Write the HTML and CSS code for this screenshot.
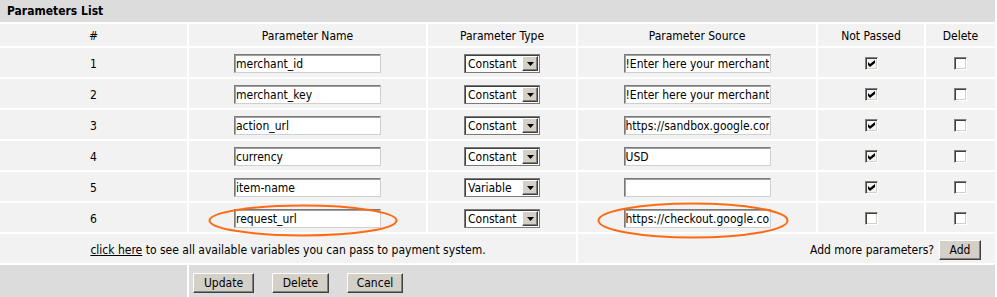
FILE: index.html
```html
<!DOCTYPE html>
<html>
<head>
<meta charset="utf-8">
<link rel="stylesheet" href="styles.css">
</head>
<body>
<div class="panel">
  <div class="title">Parameters List</div>
  <div class="grid">
    <div class="cell head">#</div>
    <div class="cell head">Parameter Name</div>
    <div class="cell head">Parameter Type</div>
    <div class="cell head">Parameter Source</div>
    <div class="cell head">Not Passed</div>
    <div class="cell head">Delete</div>

    <div class="cell">1</div>
    <div class="cell"><input class="txt" value="merchant_id"></div>
    <div class="cell"><span class="sel"><span class="sel-text">Constant</span><span class="sel-btn"><svg width="7" height="4" viewBox="0 0 7 4"><path d="M0 0h7L3.5 4z" fill="#000"/></svg></span></span></div>
    <div class="cell"><input class="txt" value="!Enter here your merchant id"></div>
    <div class="cell"><span class="chk on"><svg width="7" height="7" viewBox="0 0 7 7"><path d="M0 2l2 2 5-4v3l-5 4-2-2z" fill="#000"/></svg></span></div>
    <div class="cell"><span class="chk"></span></div>

    <div class="cell">2</div>
    <div class="cell"><input class="txt" value="merchant_key"></div>
    <div class="cell"><span class="sel"><span class="sel-text">Constant</span><span class="sel-btn"><svg width="7" height="4" viewBox="0 0 7 4"><path d="M0 0h7L3.5 4z" fill="#000"/></svg></span></span></div>
    <div class="cell"><input class="txt" value="!Enter here your merchant key"></div>
    <div class="cell"><span class="chk on"><svg width="7" height="7" viewBox="0 0 7 7"><path d="M0 2l2 2 5-4v3l-5 4-2-2z" fill="#000"/></svg></span></div>
    <div class="cell"><span class="chk"></span></div>

    <div class="cell">3</div>
    <div class="cell"><input class="txt" value="action_url"></div>
    <div class="cell"><span class="sel"><span class="sel-text">Constant</span><span class="sel-btn"><svg width="7" height="4" viewBox="0 0 7 4"><path d="M0 0h7L3.5 4z" fill="#000"/></svg></span></span></div>
    <div class="cell"><input class="txt" value="https://sandbox.google.com/checkout"></div>
    <div class="cell"><span class="chk on"><svg width="7" height="7" viewBox="0 0 7 7"><path d="M0 2l2 2 5-4v3l-5 4-2-2z" fill="#000"/></svg></span></div>
    <div class="cell"><span class="chk"></span></div>

    <div class="cell">4</div>
    <div class="cell"><input class="txt" value="currency"></div>
    <div class="cell"><span class="sel"><span class="sel-text">Constant</span><span class="sel-btn"><svg width="7" height="4" viewBox="0 0 7 4"><path d="M0 0h7L3.5 4z" fill="#000"/></svg></span></span></div>
    <div class="cell"><input class="txt" value="USD"></div>
    <div class="cell"><span class="chk on"><svg width="7" height="7" viewBox="0 0 7 7"><path d="M0 2l2 2 5-4v3l-5 4-2-2z" fill="#000"/></svg></span></div>
    <div class="cell"><span class="chk"></span></div>

    <div class="cell">5</div>
    <div class="cell"><input class="txt" value="item-name"></div>
    <div class="cell"><span class="sel"><span class="sel-text">Variable</span><span class="sel-btn"><svg width="7" height="4" viewBox="0 0 7 4"><path d="M0 0h7L3.5 4z" fill="#000"/></svg></span></span></div>
    <div class="cell"><input class="txt" value=""></div>
    <div class="cell"><span class="chk on"><svg width="7" height="7" viewBox="0 0 7 7"><path d="M0 2l2 2 5-4v3l-5 4-2-2z" fill="#000"/></svg></span></div>
    <div class="cell"><span class="chk"></span></div>

    <div class="cell">6</div>
    <div class="cell mark">
      <input class="txt" value="request_url">
      <svg class="ring ring-name" width="190" height="33" viewBox="0 0 190 33"><ellipse cx="95" cy="16.5" rx="93.5" ry="15" fill="none" stroke="#ff6a14" stroke-width="2"/></svg>
    </div>
    <div class="cell"><span class="sel"><span class="sel-text">Constant</span><span class="sel-btn"><svg width="7" height="4" viewBox="0 0 7 4"><path d="M0 0h7L3.5 4z" fill="#000"/></svg></span></span></div>
    <div class="cell mark">
      <input class="txt" value="https://checkout.google.com/api">
      <svg class="ring ring-src" width="192" height="37" viewBox="0 0 192 37"><ellipse cx="96" cy="18.5" rx="94.5" ry="17" fill="none" stroke="#ff6a14" stroke-width="2"/></svg>
    </div>
    <div class="cell"><span class="chk"></span></div>
    <div class="cell"><span class="chk"></span></div>

    <div class="cell foot-left"><a href="#" class="link">click here</a>&nbsp;to see all available variables you can pass to payment system.</div>
    <div class="cell foot-right"><span class="add-label">Add more parameters?</span><button class="btn btn-add">Add</button></div>
  </div>
  <div class="actions">
    <div class="act-left"></div>
    <div class="act-right">
      <button class="btn btn-update">Update</button>
      <button class="btn btn-delete">Delete</button>
      <button class="btn btn-cancel">Cancel</button>
    </div>
  </div>
</div>
</body>
</html>
```

FILE: styles.css
```css
* { box-sizing: border-box; }
html, body { margin: 0; padding: 0; background: #fff; }
body {
  font-family: "DejaVu Sans Condensed", "DejaVu Sans", sans-serif;
  font-size: 12px;
  color: #000;
}
.panel { width: 995px; }
.title {
  height: 22px;
  background: #dcdcdc;
  font-weight: bold;
  font-size: 12px;
  line-height: 22px;
  padding-left: 7px;
}
.grid {
  display: grid;
  grid-template-columns: 187px 237px 148px 238px 106px 69px;
  grid-template-rows: 22px repeat(6, 29px) 29px;
  gap: 2px;
  padding: 2px 0 2px;
  background: #fff;
}
.cell {
  background: #f2f2f2;
  display: flex;
  align-items: center;
  justify-content: center;
  padding-top: 2px;
}
.cell.head { padding-top: 1px; }
.mark { position: relative; }
.ring { position: absolute; pointer-events: none; }
.ring-name { left: 19px; top: 1px; }
.ring-src { left: 19px; top: -1px; }
.txt {
  width: 147px;
  height: 19px;
  margin: 0;
  padding: 0 1px;
  font-family: "DejaVu Sans Condensed", "DejaVu Sans", sans-serif;
  font-size: 12px;
  color: #000;
  background: #fff;
  border: 1px solid;
  border-color: #7a7a7a #cfcfcf #cfcfcf #7a7a7a;
  box-shadow: inset 1px 1px 0 #a0a0a0;
  outline: none;
}
.sel {
  width: 76px;
  height: 19px;
  display: flex;
  align-items: center;
  background: #fff;
  border: 1px solid #7a7a7a;
  box-shadow: inset 1px 1px 0 #404040;
  padding: 1px 1px 1px 3px;
}
.sel-text { flex: 1; line-height: 17px; padding-top: 1px; }
.sel-btn {
  width: 16px;
  height: 15px;
  background: #d4d0c8;
  border: 1px solid;
  border-color: #fff #404040 #404040 #fff;
  box-shadow: inset -1px -1px 0 #808080;
  display: flex;
  align-items: center;
  justify-content: center;
}
.chk {
  width: 13px;
  height: 13px;
  background: #fff;
  border: 1px solid;
  border-color: #808080 #fff #fff #808080;
  box-shadow: inset 1px 1px 0 #404040, inset -1px -1px 0 #d4d0c8;
  display: flex;
  align-items: center;
  justify-content: center;
}
.chk.on { background: #f4f4f4; }
.foot-left { grid-column: 1 / 4; }
.foot-right {
  grid-column: 4 / 7;
  justify-content: flex-end;
  padding-right: 14px;
}
.add-label { margin-right: 5px; }
.link { color: #000; text-decoration: underline; }
.btn {
  height: 20px;
  margin: 0;
  padding: 0;
  font-family: "DejaVu Sans Condensed", "DejaVu Sans", sans-serif;
  font-size: 12px;
  color: #000;
  background: #d4d0c8;
  border: 1px solid;
  border-color: #fff #404040 #404040 #fff;
  box-shadow: inset -1px -1px 0 #808080;
  cursor: pointer;
}
.btn-add { width: 42px; }
.btn-update { width: 61px; }
.btn-delete { width: 57px; }
.btn-cancel { width: 56px; }
.actions {
  display: grid;
  grid-template-columns: 187px 1fr;
  gap: 2px;
  height: 33px;
  background: #fff;
}
.act-left, .act-right { background: #dcdcdc; }
.act-right {
  display: flex;
  align-items: center;
  gap: 18px;
  padding-left: 4px;
  padding-top: 2px;
}
```
